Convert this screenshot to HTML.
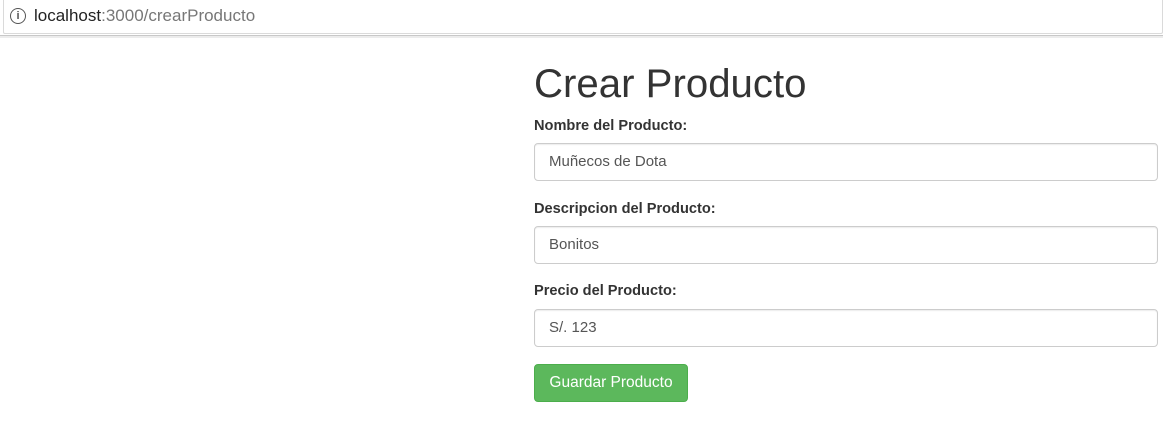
<!DOCTYPE html>
<html><head><style>
body{margin:0;width:1163px;height:432px;background:#fff;font-family:"Liberation Sans",sans-serif;overflow:hidden;position:relative}
.bar{position:absolute;left:0;top:0;width:1163px;height:35px;background:#fff;border-bottom:1px solid #c8c8c8;box-shadow:0 2px 0 #ececec}
.bar .frame{position:absolute;left:3px;top:-2px;width:1158px;height:35px;border:1px solid #dadada;border-radius:2px;border-top:none}
.url{position:absolute;left:34px;top:6px;font-size:17px;color:#222}
.url span{color:#777}
.info{position:absolute;left:10px;top:8px;width:14px;height:14px;border:1.5px solid #555;border-radius:50%;font-size:11px;font-weight:bold;color:#555;text-align:center;line-height:14px}
h1{position:absolute;left:534px;top:61px;margin:0;font-weight:normal;font-size:40.2px;color:#333}
label{position:absolute;left:534px;font-weight:bold;font-size:14.6px;color:#333}
.in{position:absolute;left:534px;width:608px;height:36px;border:1px solid #ccc;border-radius:4px;padding:0 0 0 14px;font-size:15px;color:#555;line-height:36px;box-shadow:inset 0 1px 1px rgba(0,0,0,.075)}
.btn{position:absolute;left:534px;top:364px;width:154px;height:38px;background:#5cb85c;border:1px solid #4cae4c;box-sizing:border-box;border-radius:4px;color:#fff;font-size:15.5px;text-align:center;line-height:36px}
</style></head><body>
<div class="bar"><div class="frame"></div><div class="info">i</div><div class="url">localhost<span>:3000/crearProducto</span></div></div>
<h1>Crear Producto</h1>
<label style="top:118px">Nombre del Producto:</label>
<div class="in" style="top:143px">Muñecos de Dota</div>
<label style="top:201px">Descripcion del Producto:</label>
<div class="in" style="top:226px">Bonitos</div>
<label style="top:283px">Precio del Producto:</label>
<div class="in" style="top:309px">S/. 123</div>
<div class="btn">Guardar Producto</div>
</body></html>
